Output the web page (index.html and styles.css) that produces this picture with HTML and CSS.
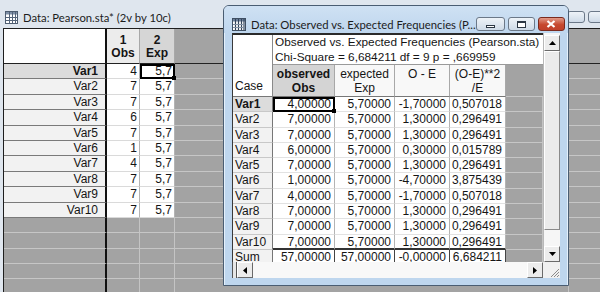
FILE: index.html
```html
<!DOCTYPE html>
<html lang="en">
<head>
    <meta charset="UTF-8">
    <title>Data: Observed vs. Expected Frequencies</title>
    <link rel="stylesheet" href="styles.css">
</head>
<body>

<div class="desk">

    <!-- back window: Pearson.sta -->
    <div class="win win-back">
        <div class="caption">
            <svg class="app-icon" width="13" height="13" viewBox="0 0 13 13">
                <rect x="0.5" y="0.5" width="12" height="12" fill="#fff" stroke="#4e5d70"/>
                <rect x="1" y="1" width="11" height="2.5" fill="#7e8fa6"/>
                <path d="M4.5 1v11M7.5 1v11M10.5 1v11M1 6.5h11M1 9.5h11" stroke="#55657a" stroke-width="1"/>
            </svg>
            <span class="caption-text">Data: Pearson.sta* (2v by 10c)</span>
            <div class="caption-btns">
                <span class="cbtn back-min"></span>
                <span class="cbtn back-max"></span>
                <span class="cbtn back-close"></span>
            </div>
        </div>

        <div class="sheet sheet-back">
            <div class="corner"></div>
            <div class="hd"><span>1</span><span>Obs</span></div>
            <div class="hd on"><span>2</span><span>Exp</span></div>
            <div class="hd-g"></div>
            <div class="hd-g"></div>

            <div class="rh on">Var1</div><div class="c">4</div><div class="c cur">5,7</div><div class="g"></div><div class="g"></div>
            <div class="rh">Var2</div><div class="c">7</div><div class="c">5,7</div><div class="g"></div><div class="g"></div>
            <div class="rh">Var3</div><div class="c">7</div><div class="c">5,7</div><div class="g"></div><div class="g"></div>
            <div class="rh">Var4</div><div class="c">6</div><div class="c">5,7</div><div class="g"></div><div class="g"></div>
            <div class="rh">Var5</div><div class="c">7</div><div class="c">5,7</div><div class="g"></div><div class="g"></div>
            <div class="rh">Var6</div><div class="c">1</div><div class="c">5,7</div><div class="g"></div><div class="g"></div>
            <div class="rh">Var7</div><div class="c">4</div><div class="c">5,7</div><div class="g"></div><div class="g"></div>
            <div class="rh">Var8</div><div class="c">7</div><div class="c">5,7</div><div class="g"></div><div class="g"></div>
            <div class="rh">Var9</div><div class="c">7</div><div class="c">5,7</div><div class="g"></div><div class="g"></div>
            <div class="rh">Var10</div><div class="c">7</div><div class="c">5,7</div><div class="g"></div><div class="g"></div>

            <div class="g gh"></div><div class="g"></div><div class="g"></div><div class="g"></div><div class="g"></div>
            <div class="g gh"></div><div class="g"></div><div class="g"></div><div class="g"></div><div class="g"></div>
            <div class="g gh"></div><div class="g"></div><div class="g"></div><div class="g"></div><div class="g"></div>
            <div class="g gh"></div><div class="g"></div><div class="g"></div><div class="g"></div><div class="g"></div>
            <div class="g gh"></div><div class="g"></div><div class="g"></div><div class="g"></div><div class="g"></div>
            <div class="g gh"></div><div class="g"></div><div class="g"></div><div class="g"></div><div class="g"></div>
        </div>
    </div>

    <!-- front window: results -->
    <div class="win win-front">
        <div class="caption">
            <svg class="app-icon" width="14" height="13" viewBox="0 0 14 13">
                <rect x="0.5" y="0.5" width="13" height="12" fill="#fff" stroke="#3f4f63"/>
                <rect x="1" y="1" width="12" height="2.5" fill="#6f84a0"/>
                <path d="M3.5 1v11M6.5 1v11M9.5 1v11M12 1v11" stroke="#33445a" stroke-width="1.2"/>
                <path d="M1 6.5h12M1 9.5h12" stroke="#8090a4" stroke-width="1"/>
            </svg>
            <span class="caption-text">Data: Observed vs. Expected Frequencies (P...</span>
            <div class="caption-btns">
                <span class="cbtn front-min"><i class="glyph-min"></i></span>
                <span class="cbtn front-max"><i class="glyph-max"></i></span>
                <span class="cbtn front-close">
                    <svg width="10" height="8" viewBox="0 0 10 8"><path d="M1.5 1l7 6M8.5 1l-7 6" stroke="#fff" stroke-width="2.2"/></svg>
                </span>
            </div>
        </div>

        <div class="client">
            <div class="sheet sheet-front">
                <div class="corner">Case</div>
                <div class="title">Observed vs. Expected Frequencies (Pearson.sta)</div>
                <div class="title title-2">Chi-Square = 6,684211 df = 9 p = ,669959</div>
                <div class="hd on"><b>observed</b><b>Obs</b></div>
                <div class="hd"><span>expected</span><span>Exp</span></div>
                <div class="hd"><span>O - E</span><span>&nbsp;</span></div>
                <div class="hd"><span>(O-E)**2</span><span>/E</span></div>
                <div class="hd-g"></div>

                <div class="rh on">Var1</div><div class="c cur">4,00000</div><div class="c">5,70000</div><div class="c">-1,70000</div><div class="c">0,507018</div><div class="g"></div>
                <div class="rh">Var2</div><div class="c">7,00000</div><div class="c">5,70000</div><div class="c">1,30000</div><div class="c">0,296491</div><div class="g"></div>
                <div class="rh">Var3</div><div class="c">7,00000</div><div class="c">5,70000</div><div class="c">1,30000</div><div class="c">0,296491</div><div class="g"></div>
                <div class="rh">Var4</div><div class="c">6,00000</div><div class="c">5,70000</div><div class="c">0,30000</div><div class="c">0,015789</div><div class="g"></div>
                <div class="rh">Var5</div><div class="c">7,00000</div><div class="c">5,70000</div><div class="c">1,30000</div><div class="c">0,296491</div><div class="g"></div>
                <div class="rh">Var6</div><div class="c">1,00000</div><div class="c">5,70000</div><div class="c">-4,70000</div><div class="c">3,875439</div><div class="g"></div>
                <div class="rh">Var7</div><div class="c">4,00000</div><div class="c">5,70000</div><div class="c">-1,70000</div><div class="c">0,507018</div><div class="g"></div>
                <div class="rh">Var8</div><div class="c">7,00000</div><div class="c">5,70000</div><div class="c">1,30000</div><div class="c">0,296491</div><div class="g"></div>
                <div class="rh">Var9</div><div class="c">7,00000</div><div class="c">5,70000</div><div class="c">1,30000</div><div class="c">0,296491</div><div class="g"></div>
                <div class="rh">Var10</div><div class="c last">7,00000</div><div class="c last">5,70000</div><div class="c last">1,30000</div><div class="c last">0,296491</div><div class="g"></div>
                <div class="rh">Sum</div><div class="c sum">57,00000</div><div class="c sum">57,00000</div><div class="c sum">-0,00000</div><div class="c sum">6,684211</div><div class="g"></div>
            </div>

            <div class="vscroll">
                <div class="sb-btn">
                    <svg width="7" height="4" viewBox="0 0 7 4"><polygon points="0,4 7,4 3.5,0" fill="#000"/></svg>
                </div>
                <div class="sb-thumb"></div>
                <div class="sb-track"></div>
                <div class="sb-btn">
                    <svg width="7" height="4" viewBox="0 0 7 4"><polygon points="0,0 7,0 3.5,4" fill="#000"/></svg>
                </div>
            </div>

            <div class="hscroll">
                <div class="splitter"></div>
                <div class="sb-btn">
                    <svg width="4" height="7" viewBox="0 0 4 7"><polygon points="4,0 4,7 0,3.5" fill="#000"/></svg>
                </div>
                <div class="sb-track"></div>
                <div class="sb-btn">
                    <svg width="4" height="7" viewBox="0 0 4 7"><polygon points="0,0 0,7 4,3.5" fill="#000"/></svg>
                </div>
            </div>

            <div class="grip">
                <svg width="12" height="12" viewBox="0 0 12 12">
                    <path d="M11 3L3 11M11 6L6 11M11 9L9 11" stroke="#8a8a8a" stroke-width="1"/>
                </svg>
            </div>
        </div>
    </div>

</div>

</body>
</html>
```

FILE: styles.css
```css
* {
    box-sizing: border-box;
}
body {
    margin: 0;
    background: #a3a3a3;
    font-family: "Liberation Sans", Arial, sans-serif;
    font-size: 12px;
    color: #151515;
}
.desk {
    position: relative;
    width: 600px;
    height: 292px;
    overflow: hidden;
}

/* windows */
.win {
    position: absolute;
    display: flex;
    flex-direction: column;
}
.win-back {
    left: 0;
    top: 0;
    width: 660px;
    height: 300px;
    background: #dfe6ee;
    padding-left: 3px;
}
.win-front {
    left: 223px;
    top: 5px;
    width: 346px;
    height: 281px;
    background: #bed6ee;
    border: 1px solid #4a5d72;
    border-radius: 6px 6px 0 0;
    padding: 0 8px 7px;
    box-shadow: inset 1px 1px 0 #e4f0fb, inset -1px 0 0 #e4f0fb;
}

/* title bars */
.caption {
    display: flex;
    align-items: center;
    flex-shrink: 0;
    font-family: Lato, "Liberation Sans", sans-serif;
    font-size: 11.3px;
    color: #1c1c1c;
}
.win-back .caption {
    height: 28px;
    padding: 6px 11px 0 2px;
}
.win-front .caption {
    height: 27px;
    padding: 9px 10px 0 8px;
    background: linear-gradient(#cfe1f3, #bed6ee);
    margin: 0 -8px;
    border-radius: 5px 5px 0 0;
}
.app-icon {
    flex-shrink: 0;
    margin-right: 5px;
}
.caption-text {
    white-space: nowrap;
}
.caption-btns {
    margin-left: auto;
    display: flex;
    gap: 3px;
}
.cbtn {
    display: flex;
    align-items: center;
    justify-content: center;
    border: 1px solid #6b7888;
    border-radius: 3px;
    background: linear-gradient(#eef3f8, #cfdbe8);
}
.back-min, .back-max {
    width: 18px;
    height: 12px;
}
.back-close {
    width: 40px;
    height: 12px;
}
.front-min {
    width: 29px;
    height: 14px;
}
.front-max {
    width: 27px;
    height: 14px;
}
.front-close {
    width: 27px;
    height: 14px;
    border-color: #7a2a1e;
    background: linear-gradient(#e29a88, #c6492f 55%, #c0402a);
}
.glyph-min {
    width: 9px;
    height: 3px;
    margin-top: 4px;
    border: 1px solid #2c3744;
    background: #fff;
}
.glyph-max {
    width: 9px;
    height: 7px;
    border: 1px solid #2c3744;
    border-top-width: 2px;
    background: #fff;
}

/* spreadsheets */
.sheet {
    display: grid;
    overflow: hidden;
    line-height: 15px;
    white-space: nowrap;
}
.sheet-back {
    flex: 1;
    grid-template-columns: 103px 33px 35px 394px 80px;
    grid-template-rows: 35px;
    grid-auto-rows: 15.4px;
    border-top: 1px solid #1e1e1e;
    border-left: 1px solid #1e1e1e;
    align-content: start;
}
.corner {
    background: #fff;
}
.hd {
    display: flex;
    flex-direction: column;
    align-items: center;
    background: #ececec;
    border-right: 1px solid #a8a8a8;
    line-height: 13px;
}
.hd.on {
    background: #d6d6d6;
}
.hd-g {
    background: #a3a3a3;
}
.rh {
    background: #f2f2f2;
}
.rh.on {
    background: #dcdcdc;
    font-weight: bold;
}
.c {
    background: #fff;
    text-align: right;
}
.g {
    background: #a3a3a3;
    border-right: 1px solid #c4c4c4;
    border-bottom: 1px solid #c6c6c6;
}
.cur {
    position: relative;
    outline: 2px solid #000;
    outline-offset: -2px;
}
.cur::after {
    content: "";
    position: absolute;
    right: -2px;
    bottom: -2px;
    width: 4px;
    height: 4px;
    background: #000;
    z-index: 2;
}

/* back sheet */
.sheet-back .corner {
    border-right: 2px solid #111;
    border-bottom: 1px solid #222;
}
.sheet-back .hd {
    justify-content: flex-end;
    padding-bottom: 3px;
    font-weight: bold;
    border-bottom: 1px solid #222;
}
.sheet-back .hd-g {
    border-bottom: 1px solid #222;
}
.sheet-back .rh {
    text-align: right;
    padding-right: 7px;
    border-right: 2px solid #111;
    border-bottom: 1px solid #7a7a7a;
}
.sheet-back .c {
    padding-right: 2px;
    border-right: 1px solid #b4b4b4;
    border-bottom: 1px solid #dadada;
}
.sheet-back .gh {
    border-right: 2px solid #111;
}

/* front window body */
.client {
    flex: 1;
    display: grid;
    grid-template-columns: 311px 17px;
    grid-template-rows: 229px 16px;
    background: #fff;
}
.sheet-front {
    grid-template-columns: 40px 62px 60px 55px 56px 37px;
    grid-template-rows: 15px 15px 32px;
    grid-auto-rows: 15.3px;
    border-top: 2px solid #2a2a2a;
    border-left: 1px solid #3a3a3a;
    align-content: start;
}
.sheet-front .corner {
    grid-row: 1 / 4;
    display: flex;
    align-items: flex-end;
    padding: 0 0 2px 2px;
    border-right: 1px solid #8a8a8a;
    border-bottom: 1px solid #777;
}
.title {
    grid-column: 2 / 7;
    padding-left: 2px;
    font-size: 11.8px;
    background: #fff;
}
.title-2 {
    border-bottom: 1px solid #9a9a9a;
}
.sheet-front .hd {
    justify-content: center;
    line-height: 14px;
    background: #f8f8f8;
    border-bottom: 1px solid #777;
}
.sheet-front .hd.on {
    background: #d4d4d4;
}
.sheet-front .hd-g {
    border-bottom: 1px solid #c6c6c6;
}
.sheet-front .rh {
    padding-left: 2px;
    border-right: 1px solid #777;
    border-bottom: 1px solid #c8c8c8;
}
.sheet-front .c {
    padding-right: 3px;
    border-right: 1px solid #b4b4b4;
    border-bottom: 1px solid #e2e2e2;
}
.sheet-front .c.last {
    border-bottom: 2px solid #333;
}
.sheet-front .c.sum {
    border-right-color: #444;
}

/* scroll bars */
.vscroll {
    display: flex;
    flex-direction: column;
    padding-top: 2px;
    background: #f6f6f6;
    border-left: 1px solid #b8b8b8;
}
.hscroll {
    display: flex;
    background: #f8f8f8;
}
.sb-btn {
    flex: 0 0 16px;
    display: flex;
    align-items: center;
    justify-content: center;
    background: #ececec;
    border: 1px solid;
    border-color: #fff #6a6a6a #6a6a6a #fff;
}
.sb-thumb {
    flex: 1;
    background: #ebebeb;
    border: 1px solid;
    border-color: #fff #8a8a8a #8a8a8a #fff;
}
.vscroll .sb-track {
    flex: 0 0 16px;
}
.hscroll .sb-track {
    flex: 1;
}
.splitter {
    flex: 0 0 5px;
    background: #e6e6e6;
    border-left: 1px solid #555;
    border-right: 1px solid #555;
}
.grip {
    display: flex;
    align-items: flex-end;
    justify-content: flex-end;
    background: #f0f0f0;
}
```
